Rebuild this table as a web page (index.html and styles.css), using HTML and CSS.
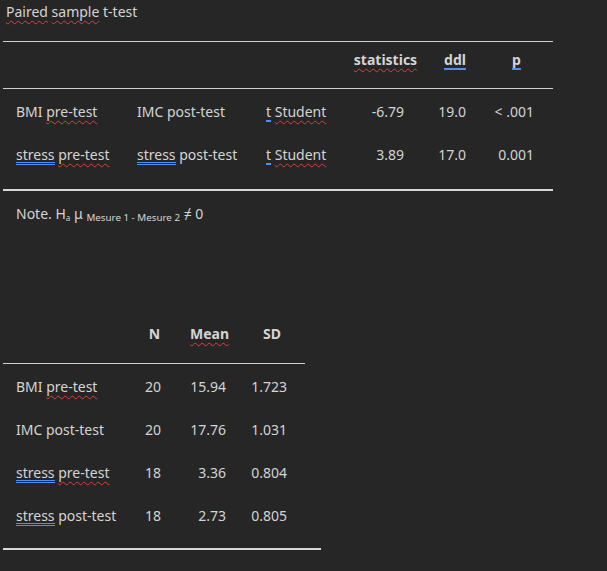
FILE: index.html
```html
<!DOCTYPE html>
<html>
<head>
<meta charset="utf-8">
<link rel="stylesheet" href="styles.css">
</head>
<body>
<div class="page">
  <div class="title"><span class="red">Paired</span> <span class="red">sample</span> t-test</div>

  <div class="t1">
    <div class="row head">
      <div class="c"></div><div class="c"></div><div class="c"></div>
      <div class="c h"><span class="red">statistics</span></div>
      <div class="c h"><span class="blue">ddl</span></div>
      <div class="c h hp"><span class="blue">p</span></div>
    </div>
    <div class="row first">
      <div class="c l">BMI <span class="red">pre-test</span></div>
      <div class="c">IMC post-test</div>
      <div class="c"><span class="blue">t</span> <span class="red">Student</span></div>
      <div class="c n n4">-6.79</div>
      <div class="c n n5">19.0</div>
      <div class="c n n6">&lt; .001</div>
    </div>
    <div class="row">
      <div class="c l"><span class="blue2">stress</span> <span class="red">pre-test</span></div>
      <div class="c"><span class="blue2">stress</span> post-test</div>
      <div class="c"><span class="blue">t</span> <span class="red">Student</span></div>
      <div class="c n n4">3.89</div>
      <div class="c n n5">17.0</div>
      <div class="c n n6">0.001</div>
    </div>
  </div>

  <div class="note">Note. H<span class="sa">a</span> μ <span class="ss">Mesure 1 - Mesure 2</span> ≠ 0</div>

  <div class="t2">
    <div class="row head">
      <div class="c"></div>
      <div class="c h">N</div>
      <div class="c h"><span class="red">Mean</span></div>
      <div class="c h hsd">SD</div>
    </div>
    <div class="row first">
      <div class="c l">BMI <span class="red">pre-test</span></div>
      <div class="c n m1">20</div>
      <div class="c n m2">15.94</div>
      <div class="c n m3">1.723</div>
    </div>
    <div class="row">
      <div class="c l">IMC post-test</div>
      <div class="c n m1">20</div>
      <div class="c n m2">17.76</div>
      <div class="c n m3">1.031</div>
    </div>
    <div class="row">
      <div class="c l"><span class="blue2">stress</span> <span class="red">pre-test</span></div>
      <div class="c n m1">18</div>
      <div class="c n m2">3.36</div>
      <div class="c n m3">0.804</div>
    </div>
    <div class="row">
      <div class="c l"><span class="blue2">stress</span> post-test</div>
      <div class="c n m1">18</div>
      <div class="c n m2">2.73</div>
      <div class="c n m3">0.805</div>
    </div>
    <div class="bottom"></div>
  </div>
</div>
</body>
</html>
```

FILE: styles.css
```css
html, body {
  margin: 0;
  padding: 0;
  background: #262626;
}
body {
  font-family: "Noto Sans", "Open Sans", sans-serif;
  font-size: 14px;
  line-height: 20px;
  color: #d4d4d4;
}
.page {
  padding: 2px 0 0 0;
  width: 607px;
  height: 569px;
}
.title {
  padding-left: 6px;
  height: 20px;
}
.red {
  text-decoration: underline wavy #d9413f;
  text-decoration-thickness: 1px;
  text-underline-offset: 3px;
  text-decoration-skip-ink: none;
}
.blue {
  text-decoration: underline solid #4f8ef7;
  text-decoration-thickness: 2px;
  text-underline-offset: 3px;
  text-decoration-skip-ink: none;
}
.blue2 {
  display: inline-block;
  vertical-align: top;
  height: 20px;
  line-height: 20px;
  background-image:
    linear-gradient(#4f8ef7, #4f8ef7),
    linear-gradient(#4f8ef7, #4f8ef7);
  background-size: 100% 1px, 100% 1px;
  background-position: 0 17px, 0 19px;
  background-repeat: no-repeat;
}
.row {
  display: grid;
  height: 43px;
  box-sizing: border-box;
  padding-top: 13px;
}
.c {
  white-space: nowrap;
}
.l {
  padding-left: 13px;
}
.h {
  font-weight: 700;
  text-align: center;
}
.n {
  text-align: right;
}

/* table 1 */
.t1 {
  margin: 19px 0 0 3px;
  width: 550px;
  border-top: 1px solid #d0d0d0;
  border-bottom: 2px solid #d8d8d8;
  padding-bottom: 14px;
}
.t1 .row {
  grid-template-columns: 134px 129px 84px 71px 68px 64px;
}
.t1 .head {
  height: 47px;
  padding-top: 8px;
  border-bottom: 1px solid #d0d0d0;
}
.t1 .hp { padding-right: 9px; }
.t1 .n4 { padding-right: 17px; }
.t1 .n5 { padding-right: 23px; }
.t1 .n6 { padding-right: 19px; }

/* note */
.note {
  margin-top: 13px;
  padding-left: 16px;
  height: 20px;
}
.sa {
  font-size: 8px;
  position: relative;
  top: 2px;
}
.ss {
  font-size: 9.8px;
  position: relative;
  top: 2px;
}

/* table 2 */
.t2 {
  margin: 90px 0 0 3px;
  width: 318px;
}
.t2 .row {
  grid-template-columns: 132px 39px 71px 60px;
  width: 302px;
}
.t2 .head {
  height: 50px;
  padding-top: 10px;
  border-bottom: 1px solid #d0d0d0;
}
.t2 .hsd { padding-right: 6px; }
.t2 .m1 { padding-right: 13px; }
.t2 .m2 { padding-right: 19px; }
.t2 .m3 { padding-right: 18px; }
.bottom {
  margin-top: 12px;
  height: 2px;
  background: #d8d8d8;
  width: 318px;
}
```
